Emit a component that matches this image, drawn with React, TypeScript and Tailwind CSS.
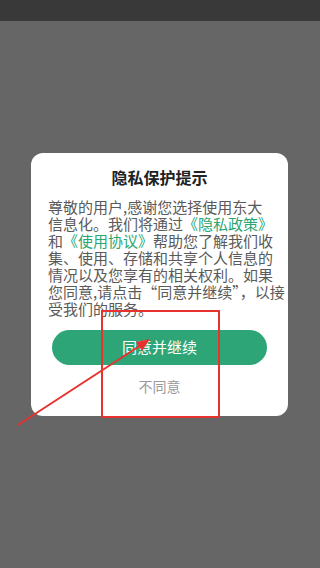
const font = { fontFamily: '"Noto Sans CJK SC", "Noto Sans", sans-serif' };

function Link({ children }: { children: string }) {
  return <span className="text-[#2ba673]">{children}</span>;
}

export default function App() {
  return (
    <div className="relative w-full h-[568px] bg-[#666666] overflow-hidden" style={font}>
      <div className="h-[21px] bg-[#393939]" />

      <div className="pt-[132px] pl-[31px]">
        <div className="w-[257px] bg-white rounded-[12px] pt-[13px] pb-[20px]">
          <h1 className="text-center text-[16px] leading-[22px] font-bold text-[#222]">隐私保护提示</h1>

          <div className="mt-[10px] px-[17px] text-[15px] leading-[17px] text-[#5a5a5a] whitespace-nowrap">
            <div>尊敬的用户,感谢您选择使用东大</div>
            <div>
              信息化。我们将通过<Link>《隐私政策》</Link>
            </div>
            <div>
              和<Link>《使用协议》</Link>帮助您了解我们收
            </div>
            <div>集、使用、存储和共享个人信息的</div>
            <div>情况以及您享有的相关权利。如果</div>
            <div>您同意,请点击“同意并继续”，以接</div>
            <div>受我们的服务。</div>
          </div>

          <div className="mt-[13px] px-[21px]">
            <button className="w-full h-[35px] rounded-full bg-[#2ea576] text-white text-[15px]">
              同意并继续
            </button>
            <div className="mt-[11px] text-center text-[14px] leading-[20px] text-[#9a9a9a]">不同意</div>
          </div>
        </div>
      </div>

      {/* red annotation overlay */}
      <svg className="absolute inset-0 pointer-events-none" width="320" height="568" viewBox="0 0 320 568">
        <rect x="102" y="311" width="117" height="106" fill="none" stroke="#e8322f" strokeWidth="2" />
        <line x1="18" y1="425" x2="141" y2="345" stroke="#e8322f" strokeWidth="2" />
        <polygon points="150,339 136,342 142,351" fill="#e8322f" />
      </svg>
    </div>
  );
}
